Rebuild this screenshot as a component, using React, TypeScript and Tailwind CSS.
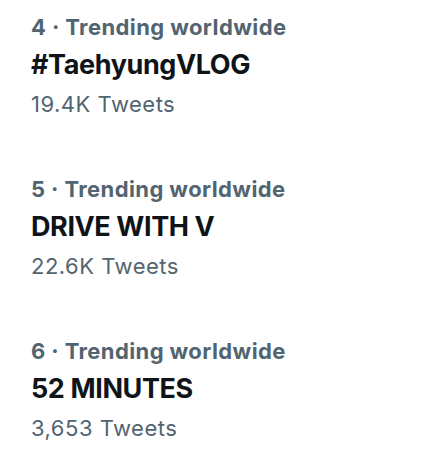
import React from 'react';

const trends = [
  { rank: 4, name: '#TaehyungVLOG', count: '19.4K Tweets' },
  { rank: 5, name: 'DRIVE WITH V', count: '22.6K Tweets' },
  { rank: 6, name: '52 MINUTES', count: '3,653 Tweets' },
];

export default function App() {
  return (
    <div
      className="w-[433px] h-[475px] bg-white overflow-hidden pt-[7px]"
      style={{ fontFamily: 'Inter, Roboto, "Liberation Sans", sans-serif' }}
    >
      {trends.map((t) => (
        <div key={t.rank} className="pl-[31px] h-[162px]">
          <div className="h-[38px] leading-[40px] text-[22px] font-bold tracking-[0.4px] text-[#536471]">
            {t.rank} · Trending worldwide
          </div>
          <div className="h-[40px] leading-[40px] text-[27px] font-bold tracking-[-0.4px] text-[#0f1419]">
            {t.name}
          </div>
          <div className="h-[38px] leading-[39px] text-[22px] tracking-[0.5px] text-[#536471]">
            {t.count}
          </div>
        </div>
      ))}
    </div>
  );
}
